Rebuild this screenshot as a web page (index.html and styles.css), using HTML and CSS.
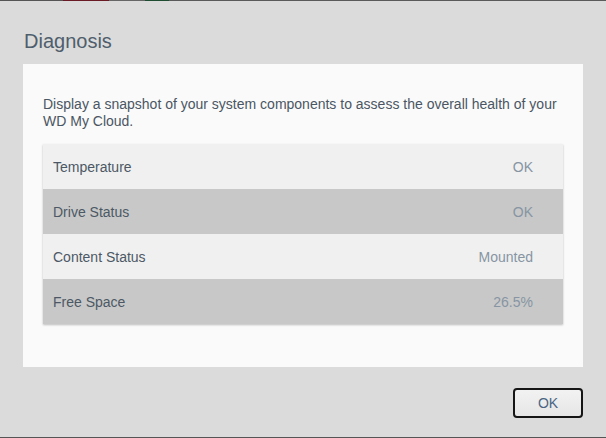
FILE: index.html
```html
<!DOCTYPE html>
<html lang="en">
<head>
  <meta charset="UTF-8" />
  <title>Diagnosis</title>
  <link rel="stylesheet" href="styles.css">
</head>
<body>
  <div class="top-strip">
    <span class="seg dark"></span>
    <span class="seg red"></span>
    <span class="seg dark2"></span>
    <span class="seg green"></span>
    <span class="seg rest"></span>
  </div>

  <div class="dialog">
    <h2 class="dialog-title">Diagnosis</h2>

    <div class="panel">
      <p class="desc">Display a snapshot of your system components to assess the overall health of your WD My Cloud.</p>

      <div class="status-table">
        <div class="row light">
          <span class="label">Temperature</span>
          <span class="value">OK</span>
        </div>
        <div class="row dark">
          <span class="label">Drive Status</span>
          <span class="value">OK</span>
        </div>
        <div class="row light">
          <span class="label">Content Status</span>
          <span class="value">Mounted</span>
        </div>
        <div class="row dark">
          <span class="label">Free Space</span>
          <span class="value">26.5%</span>
        </div>
      </div>
    </div>

    <div class="actions">
      <button class="ok-btn">OK</button>
    </div>
  </div>

  <div class="bottom-strip"></div>
</body>
</html>
```

FILE: styles.css
```css
* {
  box-sizing: border-box;
  margin: 0;
  padding: 0;
}

html, body {
  height: 100%;
}

body {
  font-family: "Liberation Sans", Arial, sans-serif;
  background: #dbdbdb;
  display: flex;
  flex-direction: column;
  overflow: hidden;
}

/* thin strip of the page behind the dialog */
.top-strip {
  display: flex;
  height: 1px;
}

.seg {
  height: 1px;
}

.seg.dark { width: 63px; background: #555; }
.seg.red { width: 46px; background: #6a1a24; }
.seg.dark2 { width: 36px; background: #666; }
.seg.green { width: 24px; background: #1f4d32; }
.seg.rest { flex: 1; background: #5a5a5a; }

.dialog {
  flex: 1;
  padding: 28px 23px 0;
}

.dialog-title {
  font-size: 20px;
  font-weight: normal;
  line-height: 24px;
  color: #4f5e6c;
  padding-left: 1px;
  margin-bottom: 11px;
}

.panel {
  background: #fafafa;
  height: 303px;
  padding: 32px 20px 0;
}

.desc {
  font-size: 14px;
  line-height: 17px;
  color: #4a5663;
  margin-bottom: 14px;
}

.status-table {
  box-shadow: 0 1px 2px rgba(0,0,0,0.25);
}

.row {
  display: flex;
  justify-content: space-between;
  align-items: center;
  height: 45px;
  padding: 0 30px 0 10px;
  font-size: 14px;
}

.row.light { background: #f0f0f0; }
.row.dark { background: #c8c8c8; }

.label {
  color: #4c5865;
}

.value {
  color: #8795a3;
}

.actions {
  display: flex;
  justify-content: flex-end;
  margin-top: 21px;
}

.ok-btn {
  width: 70px;
  height: 30px;
  border: 2px solid #151515;
  border-radius: 4px;
  background: linear-gradient(#f2f2f2, #e6e6e6);
  font-family: "Liberation Sans", Arial, sans-serif;
  font-size: 14px;
  color: #4a6584;
  cursor: pointer;
}

.bottom-strip {
  height: 1px;
  background: #555;
}
```
